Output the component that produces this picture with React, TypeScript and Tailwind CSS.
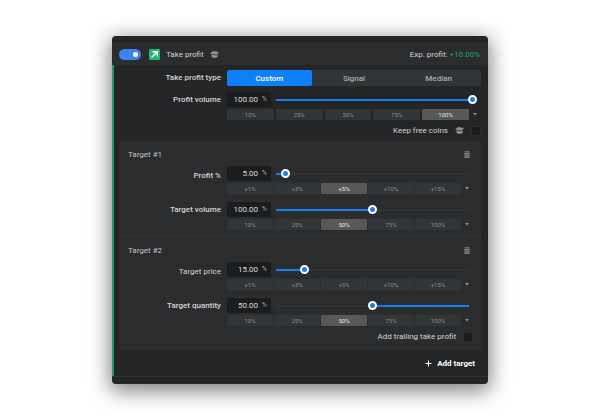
import { useId, useState } from "react";

type FieldProps = {
  label: string;
  amount: string;
  position: number;
  presets: string[];
  selected?: string;
  fillFromEnd?: boolean;
  labelClass?: string;
  sliderClass?: string;
  gapClass?: string;
};

const BLUE = "#1a7cf0";
const RAIL = "#313335";
const PERCENTS = ["10%", "25%", "50%", "75%", "100%"];
const STEPS = ["+1%", "+3%", "+5%", "+10%", "+15%"];

function CapIcon() {
  return (
    <svg viewBox="0 0 18 14" className="h-[7px] w-[9px] shrink-0 text-[#8f9092]" fill="currentColor" aria-hidden="true">
      <path d="M6 0 18 2 12.500 7.500 0 5z" />
      <path d="M3 7 12.500 9l3-3v5.500c-3 3-9.500 3-12.500 0z" />
    </svg>
  );
}

function TrashIcon() {
  return (
    <svg viewBox="0 0 12 14" className="h-[7px] w-[6px]" fill="currentColor" aria-hidden="true">
      <path d="M4 0h4v1h4v2H0V1h4z" />
      <path fillRule="evenodd" d="M1 4h10v10H1zM3.500 6v6h1V6zM7.500 6v6h1V6z" />
    </svg>
  );
}

function Slider({ label, start, fillFromEnd, className }: { label: string; start: number; fillFromEnd?: boolean; className: string }) {
  const [value, setValue] = useState(start);
  const before = fillFromEnd ? RAIL : BLUE;
  const after = fillFromEnd ? BLUE : RAIL;
  return (
    <input
      type="range"
      aria-label={label + " slider"}
      value={value}
      onChange={(e) => setValue(Number(e.target.value))}
      style={{ backgroundImage: `linear-gradient(to right, ${before} ${value}%, ${after} ${value}%)` }}
      className={
        "h-[9px] min-w-0 flex-1 cursor-pointer appearance-none bg-transparent bg-[length:calc(100%-9px)_2px] bg-center bg-no-repeat [&::-webkit-slider-thumb]:size-[9px] [&::-webkit-slider-thumb]:appearance-none [&::-webkit-slider-thumb]:rounded-full [&::-webkit-slider-thumb]:border-2 [&::-webkit-slider-thumb]:border-white [&::-webkit-slider-thumb]:bg-[#1a7cf0] " +
        className
      }
    />
  );
}

function Field({ label, amount, position, presets, selected, fillFromEnd, labelClass = "leading-[15px] font-medium", sliderClass = "", gapClass = "gap-px" }: FieldProps) {
  const id = useId();
  const [text, setText] = useState(amount);
  const [active, setActive] = useState(selected);
  return (
    <div className="grid grid-cols-[108px_1fr]">
      <label htmlFor={id} className={"pr-[6px] text-right " + labelClass}>
        {label}
      </label>
      <div className="min-w-0">
        <div className="flex items-center">
          <div className="flex h-[15px] w-[44px] items-center rounded-[1px] bg-[#1b1c1e] pr-[4px]">
            <input
              id={id}
              value={text}
              onChange={(e) => setText(e.target.value)}
              className="min-w-0 flex-1 bg-transparent text-right text-[#dcdcdc] outline-none"
            />
            <span className="w-[9px] text-right text-[7px] text-[#9b9c9e]">%</span>
          </div>
          <Slider label={label} start={position} fillFromEnd={fillFromEnd} className={sliderClass} />
        </div>
        <div className="mt-[2px] flex">
          <div className={"grid flex-1 grid-cols-5 " + gapClass}>
            {presets.map((p) => (
              <button
                key={p}
                type="button"
                aria-pressed={p === active}
                onClick={() => setActive(p)}
                className={
                  "h-[11px] rounded-[1px] text-[6px] leading-[11px] " +
                  (p === active ? "bg-[#57585a] text-[#e6e6e6]" : "bg-[#323537] text-[#8c8e90]")
                }
              >
                {p}
              </button>
            ))}
          </div>
          <button type="button" aria-label={"More " + label + " presets"} className="flex w-[12px] items-center justify-center">
            <svg viewBox="0 0 8 6" className="h-[3px] w-[4px]" fill="#949597" aria-hidden="true">
              <path d="M0 0h8L4 5z" />
            </svg>
          </button>
        </div>
      </div>
    </div>
  );
}

function CheckRow({ label, help }: { label: string; help?: boolean }) {
  const id = useId();
  return (
    <div className="mt-[5px] flex h-[11px] items-center justify-end">
      <label htmlFor={id} className="mr-[7px]">
        {label}
      </label>
      {help && (
        <span className="mr-[7px]">
          <CapIcon />
        </span>
      )}
      <input
        id={id}
        type="checkbox"
        className="size-[10px] appearance-none rounded-[1px] border border-[#2b2c2e] bg-[#1b1c1e] checked:bg-[#1a7cf0]"
      />
    </div>
  );
}

function TargetHead({ title }: { title: string }) {
  return (
    <div className="mb-[6px] flex h-[11px] items-center justify-between pr-[3px] pl-[9px]">
      <h2 className="text-[#c4c5c6]">{title}</h2>
      <button type="button" aria-label={"Delete " + title} className="text-[#7d7e80]">
        <TrashIcon />
      </button>
    </div>
  );
}

export default function App() {
  const [mode, setMode] = useState("Custom");
  return (
    <main className="min-h-screen bg-white px-28 py-9 font-[family-name:Roboto,'Liberation_Sans',sans-serif] text-[8px] leading-[11px] text-[#d4d5d6]">
      <section className="overflow-hidden rounded-[4px] bg-[#242527] pt-[7px] shadow-[0_5px_20px_2px_rgba(0,0,0,0.5)]">
        <header className="flex h-[22px] items-center bg-[#2b2c2e] pr-[8px] pl-[7px]">
          <input
            type="checkbox"
            role="switch"
            aria-label="Take profit"
            defaultChecked
            className="flex h-[11px] w-[22px] appearance-none items-center rounded-full bg-[#55575a] px-[3px] before:size-[5px] before:rounded-full before:bg-white checked:justify-end checked:bg-[#3d84f0]"
          />
          <span className="ml-[8px] flex size-[11px] items-center justify-center rounded-[1px] bg-[#22b573]">
            <svg viewBox="0 0 11 11" className="size-[11px]" fill="none" stroke="#fff" strokeWidth="1.400" aria-hidden="true">
              <path d="M2.500 8.500 8 3M3.500 2.700h4.800v4.800" />
            </svg>
          </span>
          <h1 className="mr-[6px] ml-[6px]">Take profit</h1>
          <CapIcon />
          <p className="ml-auto">
            Exp. profit: <span className="text-[#25a56c]">+10.00%</span>
          </p>
        </header>

        <div className="border-l-2 border-[#259a68] pt-[5px] pr-[7px] pl-[5px]">
          <div className="mb-[6px] grid grid-cols-[108px_1fr]">
            <span id="mode-label" className="pr-[6px] text-right leading-4 font-medium">
              Take profit type
            </span>
            <div role="group" aria-labelledby="mode-label" className="grid grid-cols-3 rounded-[2px] bg-[#323537]">
              {["Custom", "Signal", "Median"].map((m) => (
                <button
                  key={m}
                  type="button"
                  aria-pressed={m === mode}
                  onClick={() => setMode(m)}
                  className={"h-4 rounded-[2px] font-medium " + (m === mode ? "bg-[#0f80fb] text-white" : "text-[#a9abad]")}
                >
                  {m}
                </button>
              ))}
            </div>
          </div>
          <Field label="Profit volume" amount="100.00" position={100} presets={PERCENTS} selected="100%" sliderClass="mr-[4px]" gapClass="gap-[2px]" />
          <CheckRow label="Keep free coins" help />

          <div className="mt-[5px] rounded-[2px] bg-[#2b2c2e]">
            <div className="flex flex-col border-b border-[#313335] pt-[8px] pr-[8px] pb-[6px]">
              <TargetHead title="Target #1" />
              <div className="flex flex-col gap-[8px]">
                <Field label="Profit %" amount="5.00" position={5} presets={STEPS} selected="+5%" labelClass="leading-[20px] font-medium" />
                <Field label="Target volume" amount="100.00" position={50} presets={PERCENTS} selected="50%" />
              </div>
            </div>
            <div className="flex flex-col pt-[8px] pr-[8px] pb-[8px]">
              <TargetHead title="Target #2" />
              <div className="flex flex-col gap-[8px]">
                <Field label="Target price" amount="15.00" position={15} presets={STEPS} labelClass="leading-[20px]" />
                <Field label="Target quantity" amount="50.00" position={50} presets={PERCENTS} selected="50%" fillFromEnd />
              </div>
              <CheckRow label="Add trailing take profit" />
            </div>
          </div>

          <div className="flex h-[26px] items-center justify-end pr-[6px]">
            <button type="button" className="flex items-center gap-[5px] font-bold text-white">
              <svg viewBox="0 0 7 7" className="size-[7px]" stroke="currentColor" aria-hidden="true">
                <path d="M3.500 0.500v6M0.500 3.500h6" />
              </svg>
              Add target
            </button>
          </div>
        </div>
        <footer className="h-[8px] border-t border-[#303133]" />
      </section>
    </main>
  );
}
